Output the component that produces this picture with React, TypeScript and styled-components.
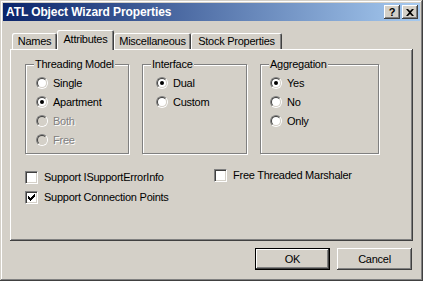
import styled, { createGlobalStyle } from "styled-components";

const GlobalStyle = createGlobalStyle`
    html, body {
        margin: 0;
        padding: 0;
        background: #d4d0c8;
    }
    body {
        font-family: "Liberation Sans", Arial, sans-serif;
        font-size: 11px;
        letter-spacing: -0.25px;
        color: #000;
    }
`;

const raised = `
    box-shadow:
        inset -1px -1px 0 #404040,
        inset 1px 1px 0 #fff,
        inset -2px -2px 0 #808080,
        inset 2px 2px 0 #d4d0c8;
`;

const Window = styled.div`
    width: 423px;
    height: 281px;
    box-sizing: border-box;
    padding: 3px;
    background: #d4d0c8;
    display: flex;
    flex-direction: column;
    box-shadow:
        inset -1px -1px 0 #404040,
        inset 1px 1px 0 #d4d0c8,
        inset -2px -2px 0 #808080,
        inset 2px 2px 0 #fff;
`;

const TitleBar = styled.div`
    height: 18px;
    display: flex;
    align-items: center;
    padding: 0 2px 0 3px;
    background: linear-gradient(to right, #0a246a, #a6caf0);
`;

const Title = styled.span`
    flex: 1;
    color: #fff;
    font-weight: bold;
    font-size: 12px;
    letter-spacing: -0.1px;
`;

const CaptionButton = styled.div<{ $gap?: number }>`
    width: 16px;
    height: 14px;
    box-sizing: border-box;
    margin-left: ${p => p.$gap ?? 0}px;
    display: flex;
    align-items: center;
    justify-content: center;
    background: #d4d0c8;
    font-weight: bold;
    font-size: 11px;
    line-height: 14px;
    ${raised}
`;

const Body = styled.div`
    padding: 0 7px;
    display: flex;
    flex-direction: column;
`;

const TabStrip = styled.div`
    margin-top: 9px;
    height: 19px;
    padding-left: 2px;
    display: flex;
    align-items: flex-end;
`;

const Tab = styled.div<{ $w: number; $active?: boolean }>`
    position: relative;
    z-index: ${p => (p.$active ? 1 : 0)};
    width: ${p => p.$w}px;
    height: ${p => (p.$active ? 20 : 16)}px;
    margin-bottom: ${p => (p.$active ? -1 : 0)}px;
    box-sizing: border-box;
    padding-top: ${p => (p.$active ? 3 : 2)}px;
    text-align: center;
    background: #d4d0c8;
    border-radius: 2px 2px 0 0;
    box-shadow:
        inset 1px 1px 0 #fff,
        inset -1px 0 0 #404040,
        inset -2px 0 0 #808080;
`;

const Panel = styled.div`
    height: 192px;
    box-sizing: border-box;
    padding: 15px 0 0 15px;
    ${raised}
`;

const GroupRow = styled.div`
    display: flex;
    gap: 13px;
`;

const Group = styled.div<{ $w: number; $pl: number }>`
    position: relative;
    width: ${p => p.$w}px;
    height: 90px;
    box-sizing: border-box;
    padding: 8px 0 0 ${p => p.$pl}px;
    border: 1px solid #808080;
    box-shadow: inset 1px 1px 0 #fff, 1px 1px 0 #fff;
    display: flex;
    flex-direction: column;
`;

const Legend = styled.span`
    position: absolute;
    top: -7px;
    left: 8px;
    padding: 0 1px;
    line-height: 13px;
    background: #d4d0c8;
`;

const OptionRow = styled.div<{ $disabled?: boolean }>`
    height: 19px;
    display: flex;
    align-items: center;
    gap: 5px;
    color: ${p => (p.$disabled ? "#808080" : "#000")};
    text-shadow: ${p => (p.$disabled ? "1px 1px 0 #fff" : "none")};
`;

const RadioDot = styled.span<{ $checked?: boolean; $disabled?: boolean }>`
    position: relative;
    flex: none;
    width: 12px;
    height: 12px;
    box-sizing: border-box;
    border-radius: 50%;
    border: 1px solid;
    border-color: #808080 #fff #fff #808080;
    &::before {
        content: "";
        position: absolute;
        inset: 0;
        border-radius: 50%;
        border: 1px solid;
        border-color: #404040 #d4d0c8 #d4d0c8 #404040;
        background: ${p => (p.$disabled ? "#d4d0c8" : "#fff")};
    }
    &::after {
        content: "";
        display: ${p => (p.$checked ? "block" : "none")};
        position: absolute;
        left: 3px;
        top: 3px;
        width: 4px;
        height: 4px;
        border-radius: 50%;
        background: #000;
    }
`;

const CheckArea = styled.div`
    margin-top: 13px;
    display: grid;
    grid-template-columns: 189px 1fr;
`;

const CheckRow = styled.div<{ $lift?: number }>`
    height: 20px;
    display: flex;
    align-items: center;
    gap: 6px;
    margin-top: ${p => -(p.$lift ?? 0)}px;
`;

const CheckBox = styled.span`
    flex: none;
    width: 13px;
    height: 13px;
    box-sizing: border-box;
    border: 1px solid;
    border-color: #808080 #fff #fff #808080;
    background: #fff;
    box-shadow: inset 1px 1px 0 #404040, inset -1px -1px 0 #d4d0c8;
    display: flex;
    align-items: center;
    justify-content: center;
`;

const ButtonRow = styled.div`
    margin-top: 7px;
    display: flex;
    justify-content: flex-end;
    gap: 7px;
    padding-right: 1px;
`;

const PushButton = styled.div<{ $default?: boolean }>`
    width: 75px;
    height: 22px;
    box-sizing: border-box;
    display: flex;
    align-items: center;
    justify-content: center;
    background: #d4d0c8;
    border: ${p => (p.$default ? "1px solid #000" : "none")};
    ${raised}
`;

function Radio({ label, checked, disabled }: { label: string; checked?: boolean; disabled?: boolean }) {
    return (
        <OptionRow $disabled={disabled}>
            <RadioDot $checked={checked} $disabled={disabled} />
            {label}
        </OptionRow>
    );
}

// classic 7x7 tick, drawn as 3px tall columns
const tick = [2, 3, 4, 3, 2, 1, 0];

function Check({ label, checked, lift }: { label: string; checked?: boolean; lift?: number }) {
    return (
        <CheckRow $lift={lift}>
            <CheckBox>
                {checked && (
                    <svg width="7" height="7" viewBox="0 0 7 7">
                        {tick.map((y, x) => (
                            <rect key={x} x={x} y={y} width="1" height="3" fill="#000" />
                        ))}
                    </svg>
                )}
            </CheckBox>
            {label}
        </CheckRow>
    );
}

export default function App() {
    return (
        <>
            <GlobalStyle />
            <Window>
                <TitleBar>
                    <Title>ATL Object Wizard Properties</Title>
                    <CaptionButton>?</CaptionButton>
                    <CaptionButton $gap={2}>
                        <svg width="8" height="7" viewBox="0 0 8 7">
                            <path d="M0 0h2l2 2 2-2h2L5 3.5 8 7H6L4 5 2 7H0l3-3.5z" fill="#000" />
                        </svg>
                    </CaptionButton>
                </TitleBar>
                <Body>
                    <TabStrip>
                        <Tab $w={45}>Names</Tab>
                        <Tab $w={57} $active>
                            Attributes
                        </Tab>
                        <Tab $w={77}>Miscellaneous</Tab>
                        <Tab $w={91}>Stock Properties</Tab>
                    </TabStrip>
                    <Panel>
                        <GroupRow>
                            <Group $w={104} $pl={10}>
                                <Legend>Threading Model</Legend>
                                <Radio label="Single" />
                                <Radio label="Apartment" checked />
                                <Radio label="Both" disabled />
                                <Radio label="Free" disabled />
                            </Group>
                            <Group $w={105} $pl={13}>
                                <Legend>Interface</Legend>
                                <Radio label="Dual" checked />
                                <Radio label="Custom" />
                            </Group>
                            <Group $w={119} $pl={9}>
                                <Legend>Aggregation</Legend>
                                <Radio label="Yes" checked />
                                <Radio label="No" />
                                <Radio label="Only" />
                            </Group>
                        </GroupRow>
                        <CheckArea>
                            <Check label="Support ISupportErrorInfo" />
                            <Check label="Free Threaded Marshaler" lift={2} />
                            <Check label="Support Connection Points" checked />
                        </CheckArea>
                    </Panel>
                    <ButtonRow>
                        <PushButton $default>OK</PushButton>
                        <PushButton>Cancel</PushButton>
                    </ButtonRow>
                </Body>
            </Window>
        </>
    );
}
